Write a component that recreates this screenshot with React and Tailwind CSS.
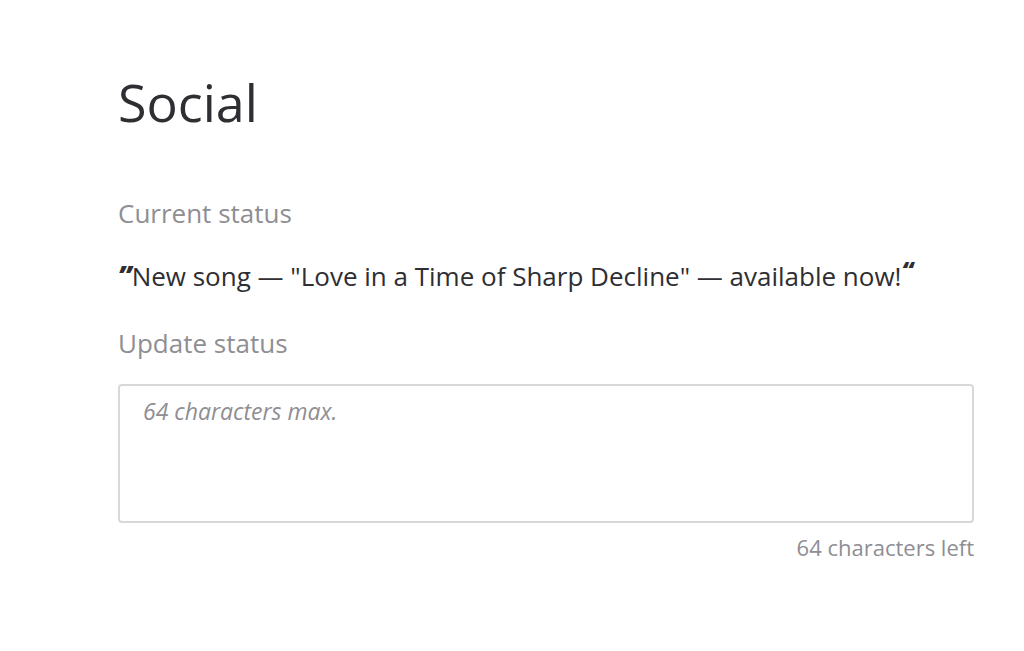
export default function App() {
  return (
    <div className="min-h-screen bg-white" style={{ fontFamily: '"Open Sans", sans-serif' }}>
      <div className="pl-[118px] pr-[50px] pt-[70px]">
        <h1 className="text-[52px] leading-[64px] text-[#2e2e33]">Social</h1>
        <div className="mt-[62px] text-[26px] leading-[34px] text-[#8e8e93]">Current status</div>
        <p className="mt-[28px] text-[26px] leading-[34px] text-[#2e2e33]">
          <span className="text-[28px] font-extrabold italic">&rdquo;</span>New song — "Love in a Time of Sharp Decline" — available now!<span className="relative top-[-6px] text-[24px] font-extrabold italic">&ldquo;</span>
        </p>
        <div className="mt-[32px] text-[26px] leading-[34px] text-[#8e8e93]">Update status</div>
        <textarea
          className="mt-[24px] block h-[139px] w-full resize-none rounded-[4px] border-2 border-[#d8d8d8] px-[23px] py-[8px] text-[23px] leading-[34px] italic text-[#2e2e33] placeholder:text-[#8e8e93] focus:outline-none"
          placeholder="64 characters max."
        />
        <div className="mt-[9px] text-right text-[22px] leading-[30px] text-[#8e8e93]">64 characters left</div>
      </div>
    </div>
  );
}
